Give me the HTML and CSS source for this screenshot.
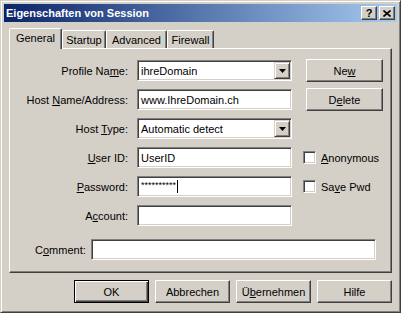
FILE: index.html
```html
<!DOCTYPE html>
<html lang="de">
<head>
    <meta charset="UTF-8">
    <title>Eigenschaften von Session</title>
    <link rel="stylesheet" href="styles.css">
</head>
<body>
    <div class="window">
        <div class="titlebar">
            <span class="title">Eigenschaften von Session</span>
            <div class="caption-buttons">
                <span class="cap-btn help">?</span>
                <span class="cap-btn close">
                    <svg width="8" height="7" viewBox="0 0 8 7"><path d="M0.5 0.5 L7.5 6.5 M7.5 0.5 L0.5 6.5" stroke="#000" stroke-width="1.6" fill="none"/></svg>
                </span>
            </div>
        </div>

        <div class="dialog">
            <!-- tab strip -->
            <div class="tabs">
                <div class="tab active tab-general">General</div>
                <div class="tab tab-startup">Startup</div>
                <div class="tab tab-advanced">Advanced</div>
                <div class="tab tab-firewall">Firewall</div>
            </div>

            <div class="panel">
                <div class="row">
                    <label class="label">Profile Na<u>m</u>e:</label>
                    <div class="field combo">
                        <span class="value">ihreDomain</span>
                        <span class="drop"><svg width="7" height="4" viewBox="0 0 7 4"><polygon points="0,0 7,0 3.5,4" fill="#000"/></svg></span>
                    </div>
                    <button class="btn side-btn">Ne<u>w</u></button>
                </div>
                <div class="row">
                    <label class="label">Host <u>N</u>ame/Address:</label>
                    <div class="field"><span class="value">www.IhreDomain.ch</span></div>
                    <button class="btn side-btn">D<u>e</u>lete</button>
                </div>
                <div class="row">
                    <label class="label">Host <u>T</u>ype:</label>
                    <div class="field combo">
                        <span class="value">Automatic detect</span>
                        <span class="drop"><svg width="7" height="4" viewBox="0 0 7 4"><polygon points="0,0 7,0 3.5,4" fill="#000"/></svg></span>
                    </div>
                </div>
                <div class="row row-gap">
                    <label class="label"><u>U</u>ser ID:</label>
                    <div class="field"><span class="value">UserID</span></div>
                    <div class="check"><span class="box"></span><span><u>A</u>nonymous</span></div>
                </div>
                <div class="row">
                    <label class="label"><u>P</u>assword:</label>
                    <div class="field"><span class="stars">**********</span><span class="caret"></span></div>
                    <div class="check"><span class="box"></span><span>Sa<u>v</u>e Pwd</span></div>
                </div>
                <div class="row">
                    <label class="label">A<u>c</u>count:</label>
                    <div class="field"></div>
                </div>
                <div class="row comment-row">
                    <label class="comment-label">C<u>o</u>mment:</label>
                    <div class="field comment-field"></div>
                </div>
            </div>

            <div class="actions">
                <button class="btn action default">OK</button>
                <button class="btn action">Abbrechen</button>
                <button class="btn action">Ü<u>b</u>ernehmen</button>
                <button class="btn action">Hilfe</button>
            </div>
        </div>
    </div>
</body>
</html>
```

FILE: styles.css
```css
body {
    margin: 0;
    background-color: #d4d0c8;
    font-family: "Liberation Sans", Arial, sans-serif;
    font-size: 11px;
    color: #000;
}
u {
    text-decoration: underline;
    text-underline-offset: 1px;
}
.window {
    width: 401px;
    height: 313px;
    box-sizing: border-box;
    border: 1px solid;
    border-color: #d4d0c8 #404040 #404040 #d4d0c8;
    box-shadow: inset 1px 1px #fff, inset -1px -1px #808080;
    padding: 3px;
    background-color: #d4d0c8;
}
.titlebar {
    height: 18px;
    display: flex;
    align-items: center;
    justify-content: space-between;
    background: linear-gradient(to right, #0a246a, #a6caf0);
    padding: 0 2px 0 2px;
}
.title {
    color: #fff;
    font-weight: bold;
    font-size: 11px;
}
.caption-buttons {
    display: flex;
    gap: 2px;
}
.cap-btn {
    width: 16px;
    height: 14px;
    box-sizing: border-box;
    background-color: #d4d0c8;
    border: 1px solid;
    border-color: #fff #404040 #404040 #fff;
    box-shadow: inset -1px -1px #808080;
    display: flex;
    align-items: center;
    justify-content: center;
    font-weight: bold;
    font-size: 11px;
    line-height: 1;
}
.dialog {
    padding: 6px 5px 0 5px;
}
.tabs {
    display: flex;
    align-items: flex-end;
    height: 21px;
    margin-bottom: -1px;
}
.tab {
    height: 18px;
    margin-bottom: 1px;
    box-sizing: border-box;
    border-top: 1px solid #fff;
    border-left: 1px solid #fff;
    border-right: 1px solid #404040;
    border-top-left-radius: 2px;
    border-top-right-radius: 2px;
    box-shadow: inset -1px 0 #808080;
    display: flex;
    align-items: center;
    justify-content: center;
    padding-top: 1px;
}
.tab.active {
    height: 21px;
    margin-bottom: 0;
    position: relative;
    z-index: 1;
    background-color: #d4d0c8;
    padding-top: 0;
    padding-bottom: 2px;
}
.tab-general { width: 53px; }
.tab-startup { width: 44px; }
.tab-advanced { width: 61px; }
.tab-firewall { width: 47px; }
.panel {
    height: 225px;
    box-sizing: border-box;
    border: 1px solid;
    border-color: #fff #404040 #404040 #fff;
    box-shadow: inset -1px -1px #808080;
    padding-top: 11px;
}
.row {
    display: flex;
    align-items: center;
    height: 21px;
    margin-bottom: 8px;
}
.row-gap {
    margin-top: 2px;
}
.label {
    width: 118px;
    text-align: right;
}
.field {
    width: 155px;
    height: 21px;
    margin-left: 9px;
    box-sizing: border-box;
    background-color: #fff;
    border: 1px solid;
    border-color: #808080 #fff #fff #808080;
    box-shadow: inset 1px 1px #404040, inset -1px -1px #d4d0c8;
    display: flex;
    align-items: center;
    padding: 0 3px;
    white-space: nowrap;
    overflow: hidden;
}
.field.combo {
    padding-right: 1px;
    justify-content: space-between;
}
.drop {
    width: 16px;
    height: 17px;
    box-sizing: border-box;
    background-color: #d4d0c8;
    border: 1px solid;
    border-color: #d4d0c8 #404040 #404040 #d4d0c8;
    box-shadow: inset 1px 1px #fff, inset -1px -1px #808080;
    display: flex;
    align-items: center;
    justify-content: center;
}
.stars {
    font-size: 9px;
    line-height: 9px;
    margin-top: -3px;
}
.caret {
    width: 1px;
    height: 13px;
    background-color: #000;
    margin-left: 1px;
}
.btn {
    font-family: inherit;
    font-size: 11px;
    color: #000;
    background-color: #d4d0c8;
    box-sizing: border-box;
    border: 1px solid;
    border-color: #fff #404040 #404040 #fff;
    box-shadow: inset -1px -1px #808080;
    padding: 0;
    height: 23px;
}
.side-btn {
    width: 77px;
    margin-left: 14px;
}
.check {
    display: flex;
    align-items: center;
    margin-left: 11px;
}
.box {
    width: 13px;
    height: 13px;
    box-sizing: border-box;
    background-color: #fff;
    border: 1px solid;
    border-color: #808080 #fff #fff #808080;
    box-shadow: inset 1px 1px #404040, inset -1px -1px #d4d0c8;
    margin-right: 5px;
}
.comment-row {
    margin-top: 13px;
    padding-left: 25px;
}
.comment-label {
    width: 56px;
}
.comment-field {
    width: 285px;
    margin-left: 0;
}
.actions {
    display: flex;
    justify-content: flex-end;
    gap: 6px;
    margin-top: 7px;
}
.action {
    width: 75px;
}
.action.default {
    border: 1px solid #000;
    box-shadow: inset 1px 1px #fff, inset -1px -1px #404040, inset -2px -2px #808080;
}
```
